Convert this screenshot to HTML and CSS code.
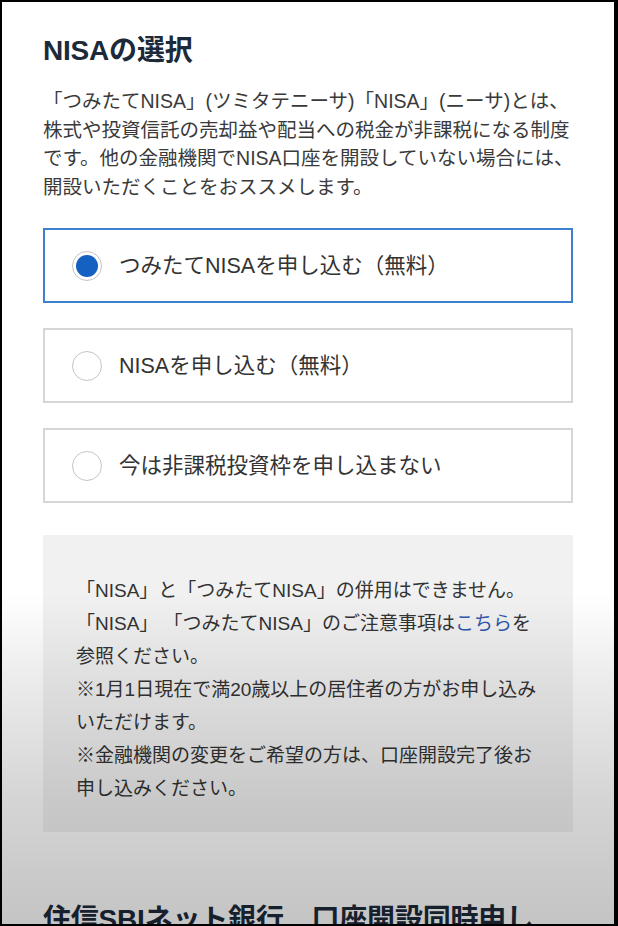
FILE: index.html
```html
<!DOCTYPE html>
<html lang="ja">
<head>
<meta charset="utf-8">
<title>NISAの選択</title>
<link rel="stylesheet" href="styles.css">
</head>
<body>
<div class="screen">
  <h2 class="title">NISAの選択</h2>
  <p class="intro">「つみたてNISA」(ツミタテニーサ)「NISA」(ニーサ)とは、<br>株式や投資信託の売却益や配当への税金が非課税になる制度<br>です。他の金融機関でNISA口座を開設していない場合には、<br>開設いただくことをおススメします。</p>
  <div class="options">
    <label class="option selected"><span class="radio"><span class="dot"></span></span><span class="label">つみたてNISAを申し込む（無料）</span></label>
    <label class="option"><span class="radio"></span><span class="label">NISAを申し込む（無料）</span></label>
    <label class="option"><span class="radio"></span><span class="label">今は非課税投資枠を申し込まない</span></label>
  </div>
  <div class="note">
    <p>「NISA」と「つみたてNISA」の併用はできません。</p>
    <p>「NISA」 「つみたてNISA」のご注意事項は<a class="link" href="#">こちら</a>を<br>参照ください。</p>
    <p>※1月1日現在で満20歳以上の居住者の方がお申し込み<br>いただけます。</p>
    <p>※金融機関の変更をご希望の方は、口座開設完了後お<br>申し込みください。</p>
  </div>
  <h2 class="title next">住信SBIネット銀行　口座開設同時申し<br>込み</h2>
  <div class="shade"></div>
</div>
</body>
</html>
```
FILE: styles.css
```css
html {
  background: #000;
}
body {
  margin: 0;
  padding: 2px 4px 2px 2px;
  font-family: "Liberation Sans", "Noto Sans CJK JP", sans-serif;
  color: #353535;
}
.screen {
  position: relative;
  background: #fff;
  height: 922px;
  overflow: hidden;
  padding: 31px 41px 0 41px;
  box-sizing: border-box;
}
.title {
  margin: 0;
  font-size: 28px;
  line-height: 36px;
  font-weight: bold;
  color: #1c2a3a;
  letter-spacing: -0.2px;
}
.intro {
  margin: 18px 0 0 0;
  font-size: 19.5px;
  line-height: 28.5px;
  color: #3a3a3a;
  white-space: nowrap;
}
.options {
  display: flex;
  flex-direction: column;
  gap: 25px;
  margin-top: 27px;
}
.option {
  display: flex;
  align-items: center;
  gap: 17px;
  height: 75px;
  box-sizing: border-box;
  border: 2px solid #d6d6d6;
  padding-left: 27px;
  background: #fff;
}
.option.selected {
  border-color: #3f7fcf;
}
.radio {
  width: 30px;
  height: 30px;
  box-sizing: border-box;
  border: 1.5px solid #c4c4c4;
  border-radius: 50%;
  display: flex;
  align-items: center;
  justify-content: center;
  flex: none;
}
.dot {
  width: 22px;
  height: 22px;
  border-radius: 50%;
  background: #1461c2;
}
.label {
  font-size: 21.5px;
  line-height: 30px;
  color: #333;
}
.note {
  margin-top: 32px;
  background: #f1f1f1;
  padding: 39px 20px 27px 33px;
}
.note p {
  margin: 0;
  font-size: 19px;
  line-height: 33px;
  color: #333;
  white-space: nowrap;
}
.link {
  color: #2f55ad;
  text-decoration: none;
}
.title.next {
  margin-top: 70px;
}
.shade {
  position: absolute;
  left: 0;
  top: 0;
  right: 0;
  bottom: 0;
  pointer-events: none;
  background: linear-gradient(to bottom,
    rgba(0,0,0,0) 0px,
    rgba(0,0,0,0) 590px,
    rgba(0,0,0,0.08) 680px,
    rgba(0,0,0,0.17) 800px,
    rgba(0,0,0,0.23) 922px);
}
```
